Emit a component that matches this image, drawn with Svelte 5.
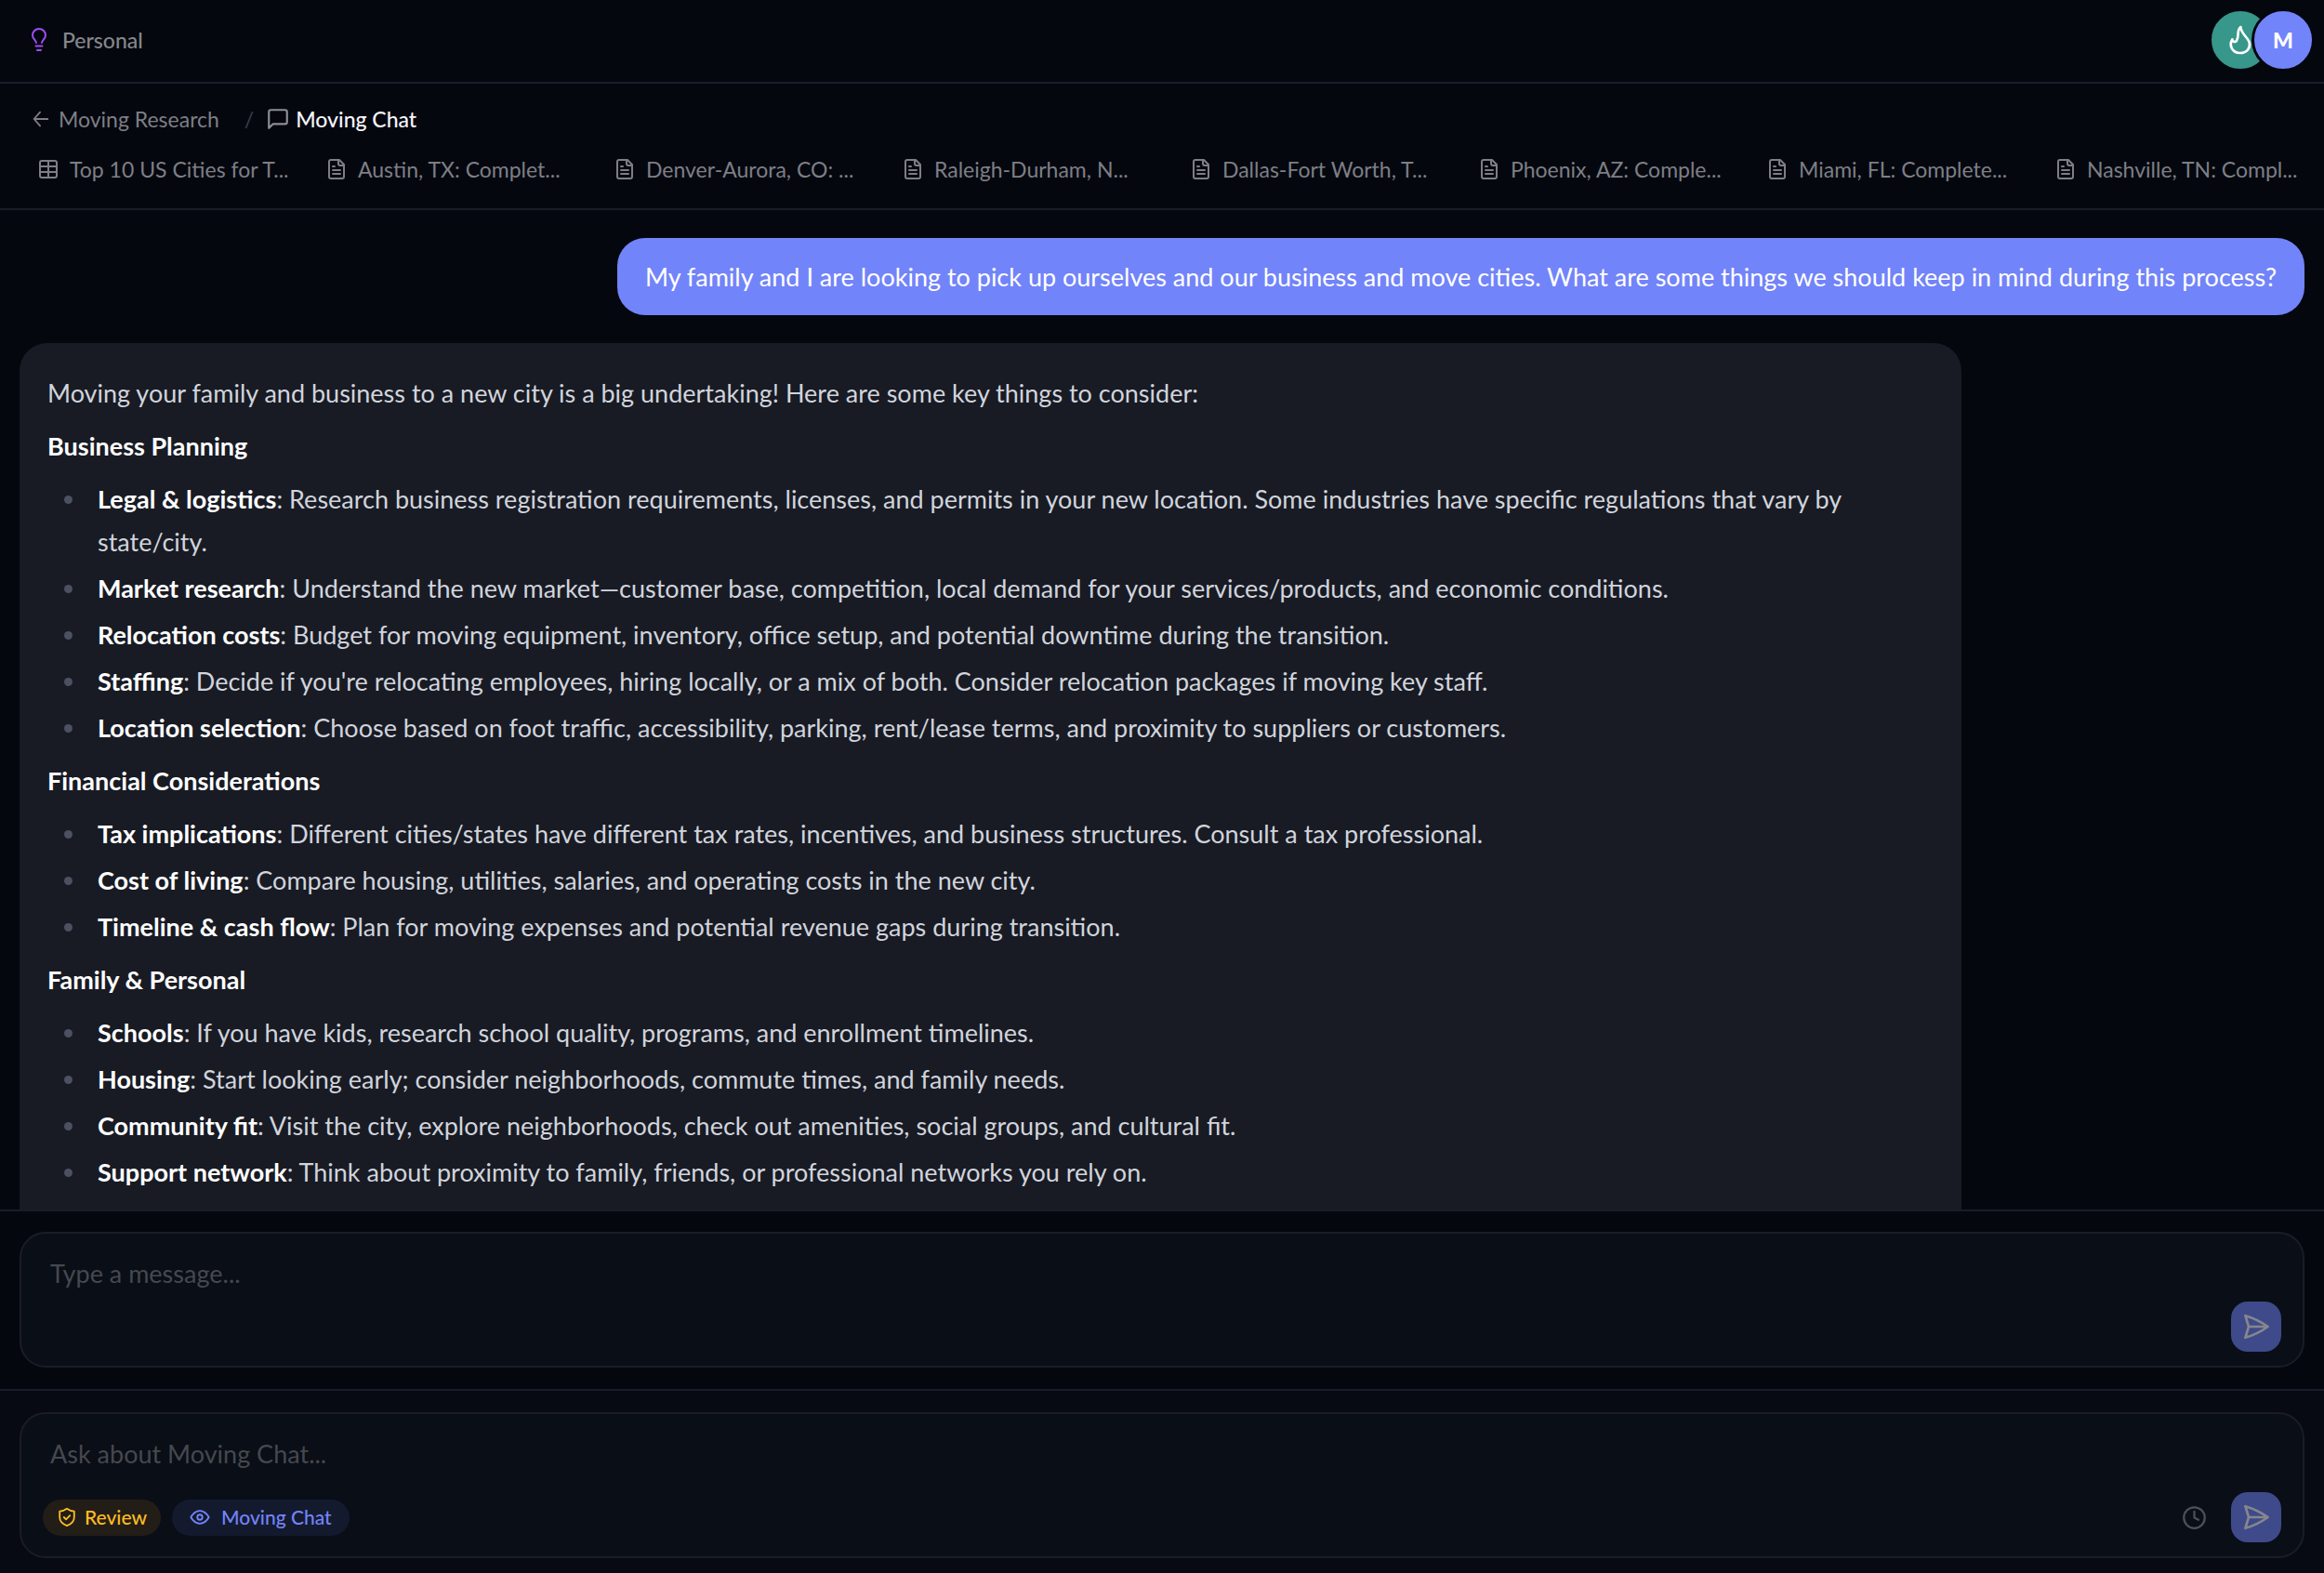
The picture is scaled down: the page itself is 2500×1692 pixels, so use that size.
<script lang="ts">
	interface Item {
		term: string;
		text: string;
	}

	interface Section {
		title: string;
		items: Item[];
	}

	const tabs = [
		{ kind: 'table', label: 'Top 10 US Cities for T...' },
		{ kind: 'doc', label: 'Austin, TX: Complet...' },
		{ kind: 'doc', label: 'Denver-Aurora, CO: ...' },
		{ kind: 'doc', label: 'Raleigh-Durham, N...' },
		{ kind: 'doc', label: 'Dallas-Fort Worth, T...' },
		{ kind: 'doc', label: 'Phoenix, AZ: Comple...' },
		{ kind: 'doc', label: 'Miami, FL: Complete...' },
		{ kind: 'doc', label: 'Nashville, TN: Compl...' }
	];

	const sections: Section[] = [
		{
			title: 'Business Planning',
			items: [
				{
					term: 'Legal & logistics',
					text: 'Research business registration requirements, licenses, and permits in your new location. Some industries have specific regulations that vary by state/city.'
				},
				{
					term: 'Market research',
					text: 'Understand the new market—customer base, competition, local demand for your services/products, and economic conditions.'
				},
				{
					term: 'Relocation costs',
					text: 'Budget for moving equipment, inventory, office setup, and potential downtime during the transition.'
				},
				{
					term: 'Staffing',
					text: "Decide if you're relocating employees, hiring locally, or a mix of both. Consider relocation packages if moving key staff."
				},
				{
					term: 'Location selection',
					text: 'Choose based on foot traffic, accessibility, parking, rent/lease terms, and proximity to suppliers or customers.'
				}
			]
		},
		{
			title: 'Financial Considerations',
			items: [
				{
					term: 'Tax implications',
					text: 'Different cities/states have different tax rates, incentives, and business structures. Consult a tax professional.'
				},
				{
					term: 'Cost of living',
					text: 'Compare housing, utilities, salaries, and operating costs in the new city.'
				},
				{
					term: 'Timeline & cash flow',
					text: 'Plan for moving expenses and potential revenue gaps during transition.'
				}
			]
		},
		{
			title: 'Family & Personal',
			items: [
				{
					term: 'Schools',
					text: 'If you have kids, research school quality, programs, and enrollment timelines.'
				},
				{
					term: 'Housing',
					text: 'Start looking early; consider neighborhoods, commute times, and family needs.'
				},
				{
					term: 'Community fit',
					text: 'Visit the city, explore neighborhoods, check out amenities, social groups, and cultural fit.'
				},
				{
					term: 'Support network',
					text: 'Think about proximity to family, friends, or professional networks you rely on.'
				}
			]
		}
	];

	let message = $state('');
	let question = $state('');
</script>

{#snippet sendIcon()}
	<svg class="icon send-icon" viewBox="0 0 24 24" aria-hidden="true">
		<path d="M6 12 3.27 3.13A59.8 59.8 0 0 1 21.49 12 59.8 59.8 0 0 1 3.27 20.88L6 12Zm0 0h15" />
	</svg>
{/snippet}

<div class="app">
	<header class="topbar">
		<a class="space" href="#personal">
			<svg class="icon bulb" viewBox="0 0 16 26" aria-hidden="true">
				<path d="M5 16c0-2.500-4-4-4-8a7 7 0 0 1 14 0c0 4-4 5.500-4 8M4.500 19.500h7M6 24h4" />
			</svg>
			Personal
		</a>
		<div class="avatars">
			<span class="avatar team">
				<svg class="icon flame" viewBox="26 22 96 96" aria-hidden="true">
					<path d="M75 28C60 42 72 58 62 72C57 79 49 76 48 68C36 88 48 112 73 112C96 112 108 94 103 78C99 62 76 50 75 28Z" />
				</svg>
			</span>
			<button class="avatar user" aria-label="Account">M</button>
		</div>
	</header>

	<nav class="subnav">
		<div class="crumbs">
			<a class="crumb" href="#research">
				<svg class="icon back" viewBox="0 0 24 24" aria-hidden="true">
					<path d="M20 12H4M11 4l-7 8 7 8" />
				</svg>
				Moving Research
			</a>
			<span class="slash">/</span>
			<span class="crumb current">
				<svg class="icon chat" viewBox="0 0 24 24" aria-hidden="true">
					<path d="M21 15a2 2 0 0 1-2 2H7l-4 4V5a2 2 0 0 1 2-2h14a2 2 0 0 1 2 2z" />
				</svg>
				Moving Chat
			</span>
		</div>
		<div class="tabs">
			{#each tabs as tab}
				<a class="tab" href="#tab">
					<svg class="icon" viewBox="0 0 24 24" aria-hidden="true">
						{#if tab.kind === 'table'}
							<rect x="3" y="3" width="18" height="18" rx="2" />
							<path d="M3 9h18M3 15h18M12 3v18" />
						{:else}
							<path d="M15 2H6a2 2 0 0 0-2 2v16a2 2 0 0 0 2 2h12a2 2 0 0 0 2-2V7zM14 2v4a2 2 0 0 0 2 2h4M10 9H8M16 13H8M16 17H8" />
						{/if}
					</svg>
					<span class="tab-label">{tab.label}</span>
				</a>
			{/each}
		</div>
	</nav>

	<main class="messages">
		<div class="message mine">
			My family and I are looking to pick up ourselves and our business and move cities. What are some things we should keep in mind during this process?
		</div>
		<article class="message reply">
			<p>Moving your family and business to a new city is a big undertaking! Here are some key things to consider:</p>
			{#each sections as section}
				<h2>{section.title}</h2>
				<ul>
					{#each section.items as item}
						<li><span><strong>{item.term}</strong>: {item.text}</span></li>
					{/each}
				</ul>
			{/each}
		</article>
	</main>

	<form class="composer">
		<div class="box">
			<textarea aria-label="Message" placeholder="Type a message..." bind:value={message}></textarea>
			<div class="actions">
				<button class="send" type="button" aria-label="Send message" disabled={!message}>
					{@render sendIcon()}
				</button>
			</div>
		</div>
	</form>

	<form class="composer assistant">
		<div class="box">
			<textarea aria-label="Question" placeholder="Ask about Moving Chat..." bind:value={question}></textarea>
			<div class="actions">
				<button class="pill review" type="button">
					<svg class="icon pill-icon" viewBox="0 0 24 24" aria-hidden="true">
						<path d="M12 2Q8 5 3.500 5v7c0 5 3.500 8 8.500 10 5-2 8.500-5 8.500-10V5Q16 5 12 2zM8.500 12l2.500 2.500 4.500-4.500" />
					</svg>
					Review
				</button>
				<button class="pill context" type="button">
					<svg class="icon pill-icon" viewBox="0 0 24 24" aria-hidden="true">
						<path d="M1.500 12S5 4.500 12 4.500s10.500 7.500 10.500 7.500-3.500 7.500-10.500 7.500S1.500 12 1.500 12z" />
						<circle cx="12" cy="12" r="3" />
					</svg>
					Moving Chat
				</button>
				<button class="history" type="button" aria-label="History">
					<svg class="icon clock" viewBox="0 0 24 24" aria-hidden="true">
						<circle cx="12" cy="12" r="10" />
						<path d="M12 6v6l4 2" />
					</svg>
				</button>
				<button class="send" type="button" aria-label="Ask" disabled={!question}>
					{@render sendIcon()}
				</button>
			</div>
		</div>
	</form>
</div>

<style>
	:global(body) {
		background: #05070f;
	}

	.app {
		display: flex;
		flex-direction: column;
		height: 100vh;
		color: #d1d4dc;
		font-family: Lato, sans-serif;
		font-size: 27px;
		line-height: 46px;
	}

	a {
		color: inherit;
		text-decoration: none;
	}

	button {
		padding: 0;
		border: 0;
		font: inherit;
		cursor: pointer;
	}

	.icon {
		flex: none;
		width: 24px;
		height: 24px;
		fill: none;
		stroke: currentColor;
		stroke-width: 2;
		stroke-linecap: round;
		stroke-linejoin: round;
	}

	.topbar {
		display: flex;
		align-items: center;
		justify-content: space-between;
		padding: 9px 10px 11px 34px;
		border-bottom: 2px solid #1a1d28;
	}

	.space {
		display: flex;
		align-items: center;
		gap: 17px;
		color: #85878c;
		font-size: 23px;
		font-weight: 500;
	}

	.bulb {
		width: 16px;
		height: 26px;
		color: #a04cf5;
	}

	.avatars {
		display: flex;
	}

	.avatar {
		box-sizing: border-box;
		display: flex;
		align-items: center;
		justify-content: center;
		width: 68px;
		height: 68px;
		border: 3px solid #05070f;
		border-radius: 50%;
		color: #fff;
	}

	.team {
		background: #37978a;
	}

	.user {
		margin-left: -22px;
		background: #7284f9;
		font-size: 23px;
		font-weight: 900;
	}

	.flame {
		width: 32px;
		height: 32px;
		stroke-width: 8;
	}

	.subnav {
		padding: 15px 0 19px;
		border-bottom: 2px solid #1a1d28;
		font-size: 23px;
		color: #7d7f85;
	}

	.crumbs {
		display: flex;
		align-items: center;
		gap: 13px;
		padding: 0 33px;
	}

	.crumb {
		display: flex;
		align-items: center;
		gap: 8px;
	}

	.back {
		width: 22px;
		height: 22px;
	}

	.slash {
		margin-left: 14px;
		color: #3a3d46;
	}

	.current {
		gap: 6px;
		color: #f5f6fa;
		font-weight: 500;
	}

	.chat {
		width: 26px;
		height: 26px;
		color: #8c8e94;
	}

	.tabs {
		display: flex;
		margin-top: 8px;
		padding-left: 40px;
		overflow: hidden;
	}

	.tab {
		flex: none;
		display: flex;
		align-items: center;
		gap: 11px;
		width: 310px;
	}

	.tab-label {
		white-space: nowrap;
	}

	.messages {
		flex: 1;
		display: flex;
		flex-direction: column;
		gap: 30px;
		min-height: 0;
		padding: 30px 21px;
		overflow: hidden;
	}

	.message {
		box-sizing: border-box;
		flex: none;
		max-width: 85%;
		border-radius: 30px;
	}

	.mine {
		align-self: flex-end;
		padding: 19px 30px 18px;
		background: #7284f9;
		color: #fff;
	}

	.reply {
		align-self: flex-start;
		display: flex;
		flex-direction: column;
		gap: 11px;
		padding: 31px 30px 64px;
		background: #181b24;
	}

	p,
	h2,
	ul {
		margin: 0;
		padding: 0;
	}

	h2,
	strong {
		color: #fff;
		font-size: 27px;
		font-weight: 700;
	}

	ul {
		display: flex;
		flex-direction: column;
		gap: 4px;
		padding-left: 18px;
		list-style: none;
	}

	li {
		display: flex;
		gap: 27px;
	}

	li::before {
		content: '';
		flex: none;
		width: 9px;
		height: 9px;
		margin-top: 19px;
		border-radius: 50%;
		background: #4b5160;
	}

	.composer {
		padding: 22px 21px 23px;
		border-top: 2px solid #1a1d28;
	}

	.assistant {
		padding: 23px 21px 16px;
		background: #070a13;
	}

	.box {
		display: flex;
		flex-direction: column;
		padding: 20px 23px 15px;
		border: 2px solid #1a1d28;
		border-radius: 28px;
		background: #0a0e16;
	}

	textarea {
		box-sizing: border-box;
		height: 53px;
		padding: 0 8px;
		border: 0;
		outline: 0;
		background: transparent;
		color: #d1d4dc;
		font: inherit;
		resize: none;
	}

	textarea::placeholder {
		color: #45484f;
		opacity: 1;
	}

	.assistant textarea {
		height: 64px;
	}

	.actions {
		display: flex;
		align-items: center;
		gap: 12px;
	}

	.pill {
		display: flex;
		align-items: center;
		height: 39px;
		border-radius: 20px;
		font-size: 21px;
		font-weight: 500;
	}

	.pill-icon {
		width: 22px;
		height: 22px;
	}

	.review {
		gap: 8px;
		padding: 0 15px;
		background: #231d18;
		color: #fbbd23;
	}

	.context {
		gap: 12px;
		padding: 0 19px;
		background: #141a2e;
		color: #7284f9;
	}

	.history {
		display: flex;
		margin-left: auto;
		padding: 0 14px;
		background: none;
		color: #4d5058;
	}

	.clock {
		width: 27px;
		height: 27px;
	}

	.send {
		display: flex;
		align-items: center;
		justify-content: center;
		width: 54px;
		height: 54px;
		margin-left: auto;
		border-radius: 18px;
		background: #7284f9;
		color: #fff;
	}

	.history + .send {
		margin-left: 0;
	}

	.send:disabled {
		background: #3f4a8a;
		color: #85878c;
	}

	.send-icon {
		width: 32px;
		height: 32px;
	}
</style>
